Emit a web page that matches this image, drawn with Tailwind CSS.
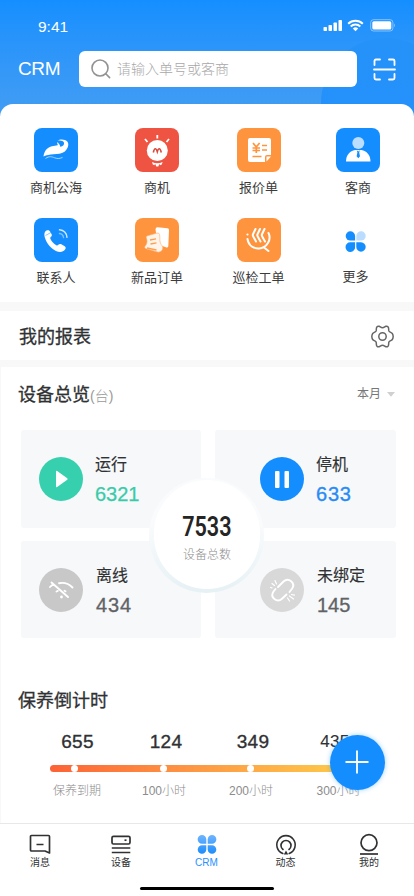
<!DOCTYPE html>
<html lang="zh-CN">
<head>
<meta charset="utf-8">
<meta name="viewport" content="width=device-width, initial-scale=1">
<title>CRM</title>
<script src="https://cdn.jsdelivr.net/npm/@tailwindcss/browser@4"></script>
</head>
<body class="bg-white">
<div class="relative flex h-[896px] w-[414px] flex-col overflow-hidden bg-white font-['Liberation_Sans','Noto_Sans_CJK_SC',sans-serif] text-[#303133]">

  <!-- Header -->
  <header class="relative h-[116px] shrink-0 overflow-hidden bg-linear-to-b from-[#148fff] to-[#429df3] text-white">
    <div class="absolute left-[321px] top-[38px] size-[130px] rounded-full bg-linear-to-b from-[#2592fa] to-[#2490fa]"></div>
    <div class="relative flex h-[51px] items-start justify-between pl-[38px] pr-[18px] pt-[19px]">
      <span class="text-[15.5px] leading-[16px]">9:41</span>
      <svg class="h-[14px] w-[74px]" viewBox="0 0 74 14" fill="none">
        <g fill="#fff"><rect x="1.500" y="8" width="3.500" height="4" rx=".8"/><rect x="6.500" y="6" width="3.500" height="6" rx=".8"/><rect x="11.500" y="3.500" width="3.500" height="8.500" rx=".8"/><rect x="16.500" y="1" width="3.500" height="11" rx=".8"/><path d="M33.500 12.300 30.800 9.500a3.900 3.900 0 0 1 5.400 0z"/></g>
        <path d="M26.200 4.700a10.600 10.600 0 0 1 14.600 0M28.700 7.500a6.900 6.900 0 0 1 9.600 0" stroke="#fff" stroke-width="2"/>
        <rect x="48.700" y=".7" width="22.200" height="11.300" rx="2.800" stroke="#fff" stroke-opacity=".45"/>
        <rect x="50.300" y="2.200" width="19" height="8.300" rx="1.500" fill="#fff"/>
        <path d="M72.200 4.500v3.700c1-.4 1-3.300 0-3.700z" fill="#fff" fill-opacity=".5"/>
      </svg>
    </div>
    <div class="relative flex h-[36px] items-center pl-[18px]">
      <h1 class="mt-[-2px] w-[61px] text-[19px] leading-none tracking-[-0.4px]">CRM</h1>
      <div class="flex h-[36px] w-[278px] items-center rounded-[6px] bg-white pl-[12px]">
        <svg class="size-[20px]" viewBox="0 0 20 20" fill="none" stroke="#929292" stroke-width="1.600" stroke-linecap="round"><circle cx="9" cy="9" r="8"/><path d="m14.800 14.800 3.800 3.800"/></svg>
        <span class="ml-[6px] text-[14px] font-light leading-none text-[#a8a8a8]">请输入单号或客商</span>
      </div>
      <svg class="ml-[16px] size-[23px]" viewBox="0 0 23 23" fill="none" stroke="#fff" stroke-width="1.800" stroke-linecap="round" stroke-linejoin="round"><path d="M1.500 7V3q0-1.500 1.500-1.500h4M16 1.500h4q1.500 0 1.500 1.500v4M1.500 16v4q0 1.500 1.500 1.500h4M16 21.500h4q1.500 0 1.500-1.500v-4M1 11.500h21"/></svg>
    </div>
  </header>

  <!-- Shortcuts -->
  <section class="relative mt-[-12px] h-[198px] shrink-0 rounded-t-[13px] bg-white pl-[5.5px] pt-[24px]">
    <div class="grid grid-cols-[101px_101px_102px_97px] text-[13px] leading-[18px] text-[#3c3c3c]">
      <div class="flex h-[90px] flex-col items-center gap-[7px]">
        <svg class="size-[44px]" viewBox="0 0 44 44"><rect width="44" height="44" rx="8" fill="#148eff"/><path d="M9.500 28.500C10 24.500 12 20 17 18.500c3-.8 5-.4 7-1.500-.9-.9-1-2-.3-3 .8 1.600 2.600 2.700 2.500 4.800 2.800-.2 4.600-2.500 3.600-4.500-.9-1.600-3-2.300-6.300-1.700 2.600-2 8-1.500 10 1.200 2 2.900 0 7.700-3 9.900-3.200 2.300-6.900 2.200-11 2.500-3.800.3-7 .8-10 2.300z" fill="#fff"/><path d="M11.500 30.500c4-2.800 6.500-1.700 9.200-.7 3 1.200 5.300.8 7.800-.4" fill="none" stroke="#a6d5ff" stroke-width="1"/></svg>
        <span>商机公海</span>
      </div>
      <div class="flex h-[90px] flex-col items-center gap-[7px]">
        <svg class="size-[44px]" viewBox="0 0 44 44"><rect width="44" height="44" rx="8" fill="#ee5441"/><g stroke="#fff" stroke-width="1.800"><path d="M22.300 7v3.500M10 11l2.500 3M34 11l-2.500 3"/></g><circle cx="22.300" cy="22.500" r="10.500" fill="#fff"/><path d="M18.300 24.500c1.200-5 2.800-4.700 4-.8 1.200-3.900 2.800-4.200 4 .8" fill="none" stroke="#d94a3c" stroke-width="1.600"/><path d="M17 34q5.300 2.600 10.600 0l-.8 2.500-1.800.8-.5-1.500-1.200 2.800h-2l-1.200-2.800-.6 1.500-1.700-.8z" fill="#fff"/></svg>
        <span>商机</span>
      </div>
      <div class="flex h-[90px] flex-col items-center gap-[7px]">
        <svg class="size-[44px]" viewBox="0 0 44 44"><rect width="44" height="44" rx="8" fill="#ff943e"/><path d="M13 10h19q2 0 2 2v15h-4q-2 0-2 2v5H13q-2 0-2-2V12q0-2 2-2zM29.500 28.500H34L29.500 33.500z" fill="#fff"/><g fill="none" stroke="#ff943e" stroke-width="1.700"><path d="m16 15 3.300 4 3.300-4M19.300 19v6M15.500 20h7.500M15.500 22.500h7.500M25 17.500h5M25 22h5M15.500 28.500h9"/></g></svg>
        <span>报价单</span>
      </div>
      <div class="flex h-[90px] flex-col items-center gap-[7px]">
        <svg class="size-[44px]" viewBox="0 0 44 44"><rect width="44" height="44" rx="8" fill="#148eff"/><circle cx="22.300" cy="15" r="6" fill="#bcdeff"/><path d="M10 33.500c0-6.500 4-10.500 9-11.500h6.500c5 1 9 5 9 11.500z" fill="#fff"/><path d="m20.800 22.300 1.500 1.300 1.500-1.300-.6 2.300.8 3.700-1.700 1.900-1.700-1.900.8-3.700z" fill="#148eff"/></svg>
        <span>客商</span>
      </div>
      <div class="flex h-[90px] flex-col items-center gap-[7px]">
        <svg class="size-[44px]" viewBox="0 0 44 44"><rect width="44" height="44" rx="8" fill="#148eff"/><path d="M12.500 12.600c1.300-.8 2.800-.4 3.500.8l1.500 2.500c.8 1.500.2 2.200-.8 3.100-.6.600-.5 1.300-.2 2 1.300 2.700 3.200 4.900 5.800 6.200.8.400 1.400.2 2-.4.800-.9 1.800-1.200 3-.5l3.400 2c1.200.8 1.300 1.900.5 3-2 3-5.700 3.300-9.300 1.600C16.500 30.300 12.800 25.500 11 20c-1-3.200-.8-6.200 1.500-7.400z" fill="#fff"/><path d="m11.500 17.500 5.500-3" stroke="#148eff" stroke-width=".5"/><g fill="none" stroke="#d0e8ff" stroke-width="1.400" stroke-linecap="round"><path d="M25.500 11.800c4.300.5 7 3.300 7.500 7.500"/><path d="M25.500 15.500c2.500.3 3.700 1.700 4 4" stroke="#7fc1ff"/></g></svg>
        <span>联系人</span>
      </div>
      <div class="flex h-[90px] flex-col items-center gap-[7px]">
        <svg class="size-[44px]" viewBox="0 0 44 44"><rect width="44" height="44" rx="8" fill="#ff943e"/><path d="M22.500 9.300 32.500 10.200q1.500.2 1.500 1.700l-.7 16.300q-.2 1.500-1.800 1.300l-9-3.300-2-15q.2-2 2-1.900z" fill="#fff"/><path d="m12.500 17.800 9.500-2.700q2-.5 2.500 1.200c.8 3-.3 6 1 9 .6 1.800 2.300 2.400 2.300 4.400 0 2.700-2 4.200-4.500 4.500l-12.500-3.500q-1.800-.8-.8-2.400c2.700-3 2.200-6 1.300-8.500q-.7-1.500 1.200-2z" fill="#fff4e9" stroke="#ffab68" stroke-width=".6"/><path d="m15 22 6-1.200M15.500 26l6-1.200M12 30l9.500 2" stroke="#ff9e50" stroke-width="1.300"/></svg>
        <span>新品订单</span>
      </div>
      <div class="flex h-[90px] flex-col items-center gap-[7px]">
        <svg class="size-[44px]" viewBox="0 0 44 44"><rect width="44" height="44" rx="8" fill="#ff943e"/><g fill="none" stroke="#fff" stroke-width="2" stroke-linecap="round"><path d="m18.500 11-2.500 5.200q-.5 1 .1 2l2.900 5.300M23 11l-2.500 5.200q-.5 1 .1 2l2.900 5.300M27.500 11 25 16.200q-.5 1 .1 2l2.900 5.300"/><path d="M10.500 21c1.200 7 6.500 9.700 11.500 9.500 7.800-.3 12.800-9 9.500-15.500M27 29.500l4.500 3.500"/></g><circle cx="10.500" cy="16.500" r="1.100" fill="#fff"/></svg>
        <span>巡检工单</span>
      </div>
      <div class="relative -left-[2.5px] flex h-[90px] flex-col items-center gap-[6px]">
        <svg class="size-[44px]" viewBox="0 0 44 44" fill="#148eff"><path d="M16.300 13.300a4.800 4.800 0 0 1 4.800 4.800v4.400h-4.800a4.600 4.600 0 1 1 0-9.200z"/><path d="M27.100 13.300a4.600 4.600 0 1 1 0 9.200h-4.800v-4.400a4.800 4.800 0 0 1 4.800-4.800z" fill="#b9dcff"/><path d="M16.300 24.300h4.800v4.400a4.800 4.800 0 1 1-4.800-4.400zM22.300 24.300h4.800a4.700 4.700 0 1 1-4.800 4.700z"/></svg>
        <span>更多</span>
      </div>
    </div>
  </section>

  <!-- Reports -->
  <section class="flex h-[65px] shrink-0 flex-col border-b-[7px] border-t-[9px] border-[#f8f8f8] bg-white">
    <div class="flex flex-1 items-center justify-between pl-[19px] pr-[20px]">
      <h2 class="mt-[2px] text-[18px] leading-none [-webkit-text-stroke:0.3px_#303133]">我的报表</h2>
      <svg class="mt-[2px] size-[23px]" viewBox="0 0 23 23" fill="none" stroke="#666" stroke-width="1.500" stroke-linejoin="round"><path d="M5.800 2.100q1-1.200 2.300-.8c1.200.4 1.800 1.400 3.400 1.400s2.200-1 3.400-1.400q1.300-.4 2.300.8c.9 1.200.1 2.700.8 4 .8 1.300 2.400 1.200 3.300 2.400q.7.900.9 3-.2 2.100-.9 3c-.9 1.200-2.500 1.100-3.300 2.400-.7 1.300.1 2.800-.8 4q-1 1.200-2.300.8c-1.200-.4-1.800-1.400-3.400-1.400s-2.200 1-3.400 1.400q-1.300.4-2.300-.8c-.9-1.200-.1-2.700-.8-4-.8-1.300-2.400-1.200-3.300-2.400Q1 13.600.8 11.500 1 9.400 1.700 8.500C2.600 7.300 4.200 7.400 5 6.100c.7-1.300-.1-2.800.8-4z"/><circle cx="11.500" cy="11.500" r="3.700"/></svg>
    </div>
  </section>

  <!-- Device overview -->
  <section class="h-[271px] shrink-0 border-l border-[#f8f8f8] pl-[20px] pr-[18px]">
    <div class="flex h-[63px] items-start justify-between pt-[18px]">
      <h2 class="-ml-[3px] flex items-baseline text-[18px] leading-[20px] [-webkit-text-stroke:0.3px_#303133]">设备总览<small class="text-[14px] font-light text-[#999] [-webkit-text-stroke:0]">(台)</small></h2>
      <div class="mr-[1px] flex items-center gap-[6px] pt-[1px] text-[12px] leading-[17px] text-[#777]">本月<svg class="h-[5px] w-[8px]" viewBox="0 0 8 5"><path d="M0 0h8L4 4.800z" fill="#d0d0d0"/></svg></div>
    </div>
    <div class="relative grid w-[375px] grid-cols-[180px_181px] grid-rows-[98px_97px] gap-x-[14px] gap-y-[13px]">
      <div class="flex items-center gap-[12px] rounded-[3px] bg-[#f6f8fa] pl-[18px]">
        <svg class="size-[44px]" viewBox="0 0 44 44"><circle cx="22" cy="22" r="22" fill="#36d0ae"/><path d="M17 14.500v15q0 1.300 1.200.5l10-7.200q1-.8 0-1.600l-10-7.200q-1.200-.8-1.200.5z" fill="#fff"/></svg>
        <div class="pt-[3px]"><div class="text-[16px] leading-[20px] [-webkit-text-stroke:0.15px_#303133]">运行</div><div class="mt-[7px] text-[20px] leading-[24px] text-[#38cba9] [-webkit-text-stroke:0.25px_#38cba9]">6321</div></div>
      </div>
      <div class="flex items-center gap-[12px] rounded-[3px] bg-[#f6f8fa] pl-[45px]">
        <svg class="size-[44px]" viewBox="0 0 44 44"><circle cx="22" cy="22" r="22" fill="#148eff"/><rect x="15" y="14" width="4.500" height="17" rx="1" fill="#fff"/><rect x="24.500" y="14" width="4.500" height="17" rx="1" fill="#fff"/></svg>
        <div class="pt-[3px]"><div class="text-[16px] leading-[20px] [-webkit-text-stroke:0.15px_#303133]">停机</div><div class="mt-[7px] text-[20px] leading-[24px] tracking-[0.8px] text-[#288bf5] [-webkit-text-stroke:0.35px_#288bf5]">633</div></div>
      </div>
      <div class="flex items-center gap-[13px] rounded-[3px] bg-[#f6f8fa] pl-[18px]">
        <svg class="size-[44px]" viewBox="0 0 44 44"><circle cx="22" cy="22" r="22" fill="#c8c8c8"/><g fill="none" stroke="#fff" stroke-width="1.900" stroke-linecap="round"><path d="M12.500 14.500 29 29M11 19q1.500-1.800 3.500-2.700M20 15.200c5-.9 10 .6 13.500 4.300M17.500 23.500l1.300-.6M25.500 22.700l1 .6"/></g><circle cx="22.500" cy="29" r="1.400" fill="#fff"/></svg>
        <div class="pt-[3px]"><div class="text-[16px] leading-[20px] [-webkit-text-stroke:0.15px_#303133]">离线</div><div class="mt-[7px] text-[20px] leading-[24px] tracking-[0.9px] text-[#606266] [-webkit-text-stroke:0.3px_#606266]">434</div></div>
      </div>
      <div class="flex items-center gap-[13px] rounded-[3px] bg-[#f6f8fa] pl-[45px]">
        <svg class="size-[44px]" viewBox="0 0 44 44"><circle cx="22" cy="22" r="22" fill="#d8d8d8"/><g fill="none" stroke="#fff" stroke-width="1.900" stroke-linecap="round"><path d="m18 19 5.500-5.500c5-4.700 12.500 1.500 8.500 7.200L29.500 24M26.500 26.500 22 30.700c-5 4.700-12.500-1.500-8.500-7.200l2-2.500"/><path d="m15 12.500 1.500 3.500M12 15.500l2.500 2M10.500 19.500l1.500.4M29.500 28l4 3M27.500 30l2 3M31.500 26.500l3 .7" stroke-width="1.200"/></g></svg>
        <div class="pt-[3px]"><div class="text-[16px] leading-[20px] [-webkit-text-stroke:0.15px_#303133]">未绑定</div><div class="mt-[7px] text-[20px] leading-[24px] text-[#606266] [-webkit-text-stroke:0.3px_#606266]">145</div></div>
      </div>
      <div class="absolute left-[128px] top-[48px] size-[115px] rounded-full bg-linear-to-b from-[#f9fbfc] from-40% to-[#e6f1f5] px-[5px] pt-[2px]">
        <div class="flex h-[109px] w-[106px] flex-col items-center rounded-full bg-white pt-[34px]">
          <strong class="origin-center scale-x-[.80] text-[27px] font-semibold leading-[27px] text-[#252525] font-['Roboto','Liberation_Sans',sans-serif]">7533</strong>
          <span class="mt-[6px] text-[12px] font-light leading-[17px] text-[#8c8c8c]">设备总数</span>
        </div>
      </div>
    </div>
  </section>

  <!-- Maintenance countdown -->
  <section class="relative h-[185px] shrink-0 border-l border-[#f8f8f8] pt-[53px]">
    <h2 class="pl-[17px] text-[18px] leading-[20px] [-webkit-text-stroke:0.3px_#303133]">保养倒计时</h2>
    <div class="ml-[33px] mt-[20px] grid grid-cols-[86px_88px_86px_87px] text-center text-[19px] leading-[22px] tracking-[0.3px] [-webkit-text-stroke:0.35px_#303133]">
      <span class="pl-[1px]">655</span><span class="pl-[4px]">124</span><span class="pl-[4px]">349</span><span class="pr-[5px] text-[17px] [-webkit-text-stroke:0.1px]">435</span>
    </div>
    <div class="ml-[49px] mt-[12px] flex h-[7px] w-[310px] items-center gap-[80px] rounded-full bg-linear-to-r from-[#fc6236] via-[#fd9b45] to-[#fdce4a] pl-[21px]">
      <i class="size-[7px] shrink-0 rounded-full bg-white"></i><i class="ml-[2px] size-[7px] shrink-0 rounded-full bg-white"></i><i class="size-[7px] shrink-0 rounded-full bg-white"></i>
    </div>
    <div class="ml-[33px] mt-[11px] grid grid-cols-[86px_88px_86px_87px] text-center text-[12px] font-light leading-[17px] text-[#8c8c8c]">
      <span>保养到期</span><span>100小时</span><span>200小时</span><span class="pl-[2px]">300小时</span>
    </div>
    <button aria-label="新增" class="absolute left-[329px] top-[97px] flex size-[55px] items-center justify-center rounded-full bg-[#148eff] shadow-[0_0_5px_#148eff66]">
      <svg class="mb-[2px] mr-[1px] size-[24px]" viewBox="0 0 24 24" stroke="#fff" stroke-width="1.800"><path d="M12 .5v23M.5 12h23"/></svg>
    </button>
  </section>

  <!-- Tab bar -->
  <nav class="relative h-[73px] shrink-0 border-t border-[#e8e8e8] bg-white pt-[9px]">
    <div class="grid grid-cols-[80px_82px_89px_69px_94px] text-[10px] leading-[12px] text-[#303133]">
      <a class="flex flex-col items-center"><svg class="size-[24px]" viewBox="0 0 24 24" fill="none" stroke="#303133" stroke-width="1.700" stroke-linejoin="round"><path d="M3.500 2.500h17q1 0 1 1v16.500L17 18H3.500q-1 0-1-1V3.500q0-1 1-1zM8.500 11.500h7"/></svg>消息</a>
      <a class="flex flex-col items-center"><svg class="size-[24px]" viewBox="0 0 24 24" fill="none" stroke="#303133" stroke-width="1.700"><rect x="3" y="3.300" width="18" height="7.700" rx="1.500"/><path d="M2.800 15h18.500M2.800 19.500h18.500"/><path d="M15.500 7.200h2"/></svg>设备</a>
      <a class="flex flex-col items-center text-[#2990ff]"><svg class="size-[24px]" viewBox="0 0 24 24"><defs><linearGradient id="clover" x1="0" y1="0" x2="0" y2="24" gradientUnits="userSpaceOnUse"><stop stop-color="#78b9ff"/><stop offset="1" stop-color="#0f86fa"/></linearGradient></defs><path d="M7 2a4.300 4.300 0 0 1 4.300 4.300v4.400H7A4.350 4.350 0 0 1 7 2zM17 2a4.350 4.350 0 0 1 0 8.700h-4.300V6.300A4.300 4.300 0 0 1 17 2zM7 12.200h4.300v4.400A4.300 4.300 0 1 1 7 12.200zM12.700 12.200H17a4.300 4.300 0 1 1-4.300 4.400z" fill="url(#clover)"/></svg>CRM</a>
      <a class="flex flex-col items-center"><svg class="size-[24px]" viewBox="0 0 24 24" fill="none" stroke="#303133" stroke-width="1.600" stroke-linecap="round"><path d="M8.800 20.500a9.200 9.200 0 1 1 6.400 0"/><path d="M9 16.500a5 5 0 1 1 6 0"/><path d="m12 17.500 2.200 4H9.800z" fill="#303133" stroke="none"/></svg>动态</a>
      <a class="flex flex-col items-center pl-[4px]"><svg class="size-[24px]" viewBox="0 0 24 24" fill="none" stroke="#303133" stroke-width="1.700"><circle cx="12" cy="9.700" r="8"/><path d="M3 21h18"/></svg>我的</a>
    </div>
    <div class="absolute left-[140px] top-[63px] h-[3px] w-[134px] rounded-full bg-black"></div>
  </nav>
</div>
</body>
</html>
